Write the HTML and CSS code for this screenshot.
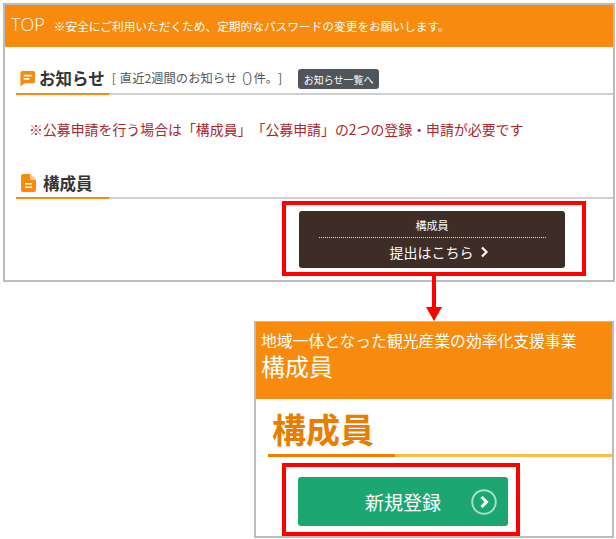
FILE: index.html
```html
<!DOCTYPE html>
<html lang="ja">
<head>
<meta charset="utf-8">
<title>構成員</title>
<link rel="stylesheet" href="styles.css">
</head>
<body>
<section class="frame frame-top">
  <header class="top-bar"><span class="top-title">TOP</span><span class="top-note">※安全にご利用いただくため、定期的なパスワードの変更をお願いします。</span></header>
  <div class="heading-row news-row">
    <svg class="head-icon" width="17" height="17" viewBox="0 0 18 18"><path d="M3 1h12a2 2 0 0 1 2 2v9a2 2 0 0 1-2 2H6l-4.500 3.500V3A2 2 0 0 1 3 1z" fill="#f88b0d"/><path d="M5 5h9v1.800H5zM5 8.500h6v1.800H5z" fill="#fff"/></svg>
    <h2 class="heading">お知らせ</h2>
    <span class="news-count">[<span class="count-text">直近2週間のお知らせ</span><b class="zero">0</b>件。]</span>
    <span class="badge">お知らせ一覧へ</span>
  </div>
  <p class="alert">※公募申請を行う場合は「構成員」「公募申請」の2つの登録・申請が必要です</p>
  <div class="heading-row member-row">
    <svg class="head-icon" width="15" height="18" viewBox="0 0 15 18"><path d="M2 0h7l6 6v10a2 2 0 0 1-2 2H2a2 2 0 0 1-2-2V2a2 2 0 0 1 2-2z" fill="#f88b0d"/><path d="M9 0v5a1 1 0 0 0 1 1h5z" fill="#fbc98c"/><path d="M4 9h7v1.500H4zM4 12.500h7V14H4z" fill="#fff"/></svg>
    <h2 class="heading">構成員</h2>
  </div>
  <div class="red-box red-box-dark">
    <a class="dark-btn">
      <span class="dark-label">構成員</span>
      <span class="dark-action">提出はこちら<svg class="chev" width="9" height="12" viewBox="0 0 9 12"><path d="M2 1.500 6.500 6 2 10.500" fill="none" stroke="#fff" stroke-width="2.200"/></svg></span>
    </a>
  </div>
</section>
<svg class="arrow" width="16" height="45" viewBox="0 0 16 45"><path d="M6 0h4v31h6L8 45 0 31h6z" fill="#f00"/></svg>
<section class="frame frame-bottom">
  <header class="sub-bar">
    <p class="sub-project">地域一体となった観光産業の効率化支援事業</p>
    <p class="sub-title">構成員</p>
  </header>
  <h1 class="big-title">構成員</h1>
  <div class="red-box red-box-green">
    <a class="green-btn">新規登録<svg class="circle-chev" width="26" height="26" viewBox="0 0 26 26"><circle cx="13" cy="13" r="11.800" fill="none" stroke="#a9e0cb" stroke-width="2"/><path d="M10.500 8 15.500 13 10.500 18" fill="none" stroke="#fff" stroke-width="3"/></svg></a>
  </div>
</section>
</body>
</html>
```
FILE: styles.css
```css
* { box-sizing: border-box; }
html, body { margin: 0; padding: 0; }
body {
  width: 616px;
  height: 539px;
  overflow: hidden;
  background: #fff;
  padding: 3px 0 0 3px;
  font-family: "Noto Sans CJK JP", "Noto Sans", sans-serif;
  color: #333;
  text-spacing-trim: space-all;
}
p, h1, h2 { margin: 0; }
.frame { border: 2px solid #bcbcbc; background: #fff; }
.frame-top { width: 612px; height: 279px; }
.top-bar {
  height: 42px;
  background: #f88b0d;
  color: #fff;
  display: flex;
  align-items: center;
  padding-left: 6px;
}
.top-title { font-size: 18px; font-weight: 300; line-height: 1; font-family: "Open Sans", "Noto Sans", sans-serif; margin-bottom: 4px; }
.top-note { font-size: 11.7px; margin-left: 9px; line-height: 1; white-space: nowrap; }
.heading-row {
  margin-left: 11px;
  display: flex;
  align-items: center;
  border-bottom: 2px solid #cfcfcf;
  position: relative;
}
.heading-row::after {
  content: "";
  position: absolute;
  left: 0;
  bottom: -2px;
  width: 93px;
  height: 2px;
  background: #f88b0d;
}
.news-row { margin-top: 16px; padding-left: 3px; height: 32px; }
.member-row { padding-left: 5px; height: 30px; }
.heading { font-size: 16.5px; font-weight: 700; color: #333; line-height: 1; margin-left: 3px; white-space: nowrap; }
.member-row .heading { margin-left: 7px; }
.news-count { font-size: 12.3px; color: #555; margin-left: 7px; line-height: 1; display: flex; align-items: center; white-space: nowrap; }
.count-text { margin-left: 4px; }
.zero { font-family: "Open Sans", "Noto Sans", sans-serif; font-size: 18px; font-weight: 300; margin: 0 1px 0 5px; line-height: 1; }
.badge {
  margin-left: 16px;
  margin-top: 2px;
  width: 81px;
  height: 20px;
  background: #50555b;
  color: #fff;
  font-size: 10px;
  border-radius: 3px;
  display: flex;
  align-items: center;
  justify-content: center;
  white-space: nowrap;
}
.alert { font-size: 13.92px; line-height: 20px; color: #a8262c; margin: 24px 0 0 24px; height: 50px; white-space: nowrap; }
.red-box { border: 4px solid #f00; }
.red-box-dark {
  width: 304px;
  height: 75px;
  margin: 2px 0 0 277px;
  padding: 6px 0 0 13px;
}
.dark-btn {
  width: 266px;
  height: 57px;
  background: #3e2d27;
  border-radius: 3px;
  color: #fff;
  display: flex;
  flex-direction: column;
  align-items: center;
}
.dark-label {
  width: 227px;
  height: 27px;
  font-size: 11px;
  line-height: 29px;
  text-align: center;
  border-bottom: 1px dotted #ddd;
}
.dark-action { font-size: 14px; line-height: 28px; display: flex; align-items: center; padding-left: 14px; }
.chev { margin-left: 6px; }
.arrow { display: block; margin: -6px 0 0 423px; position: relative; }
.frame-bottom { width: 360px; height: 217px; margin-left: 251px; border-top-width: 1px; }
.sub-bar { height: 77px; background: #f88b0d; color: #fff; padding: 9px 0 0 5px; }
.sub-project { font-size: 15.8px; line-height: 20px; white-space: nowrap; }
.sub-title { font-size: 24px; line-height: 28px; margin-top: 1px; }
.big-title {
  font-size: 34px;
  font-weight: 700;
  line-height: 40px;
  color: #e87d00;
  margin-left: 12px;
  padding: 10px 0 0 4px;
  height: 58px;
  border-bottom: 3px solid #f9bf45;
  position: relative;
}
.big-title::after {
  content: "";
  position: absolute;
  left: 0;
  bottom: -3px;
  width: 127px;
  height: 3px;
  background: #f27c00;
}
.red-box-green {
  width: 238px;
  height: 73px;
  margin: 6px 0 0 26px;
  padding: 10px 0 0 12px;
}
.green-btn {
  position: relative;
  width: 210px;
  height: 49px;
  background: #1ba672;
  border-radius: 3px;
  color: #fff;
  font-size: 19px;
  display: flex;
  align-items: center;
  justify-content: center;
}
.circle-chev { position: absolute; right: 11px; top: 12px; }
```
